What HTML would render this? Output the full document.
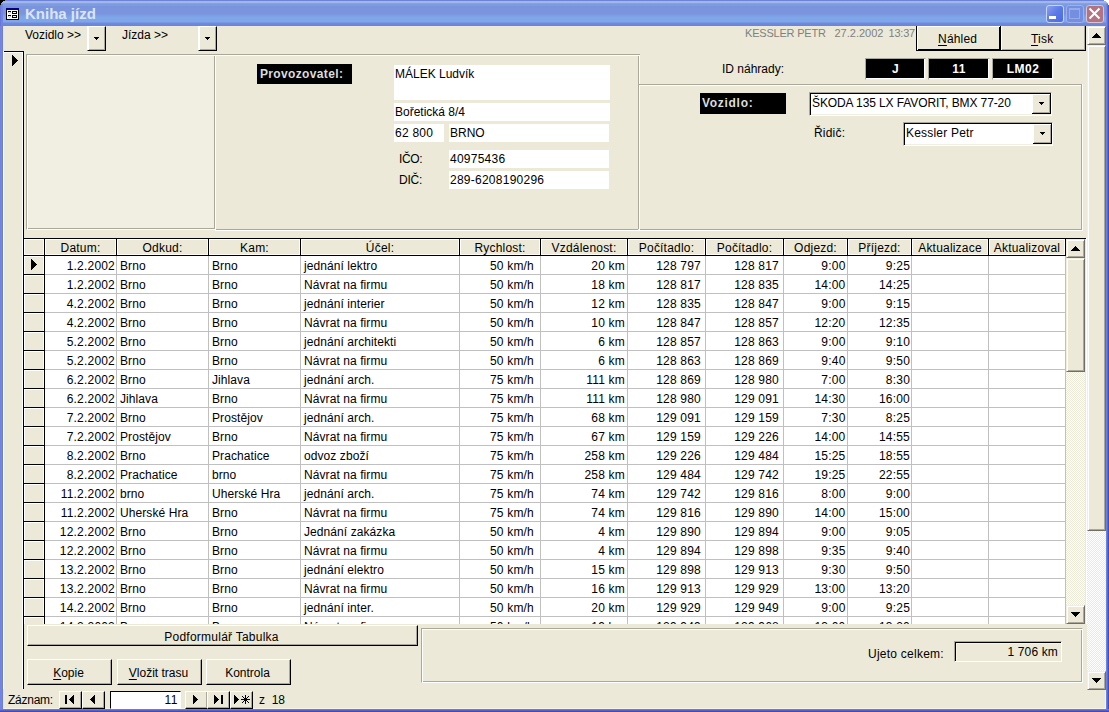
<!DOCTYPE html><html><head><meta charset="utf-8"><style>
*{box-sizing:border-box}
html,body{margin:0;padding:0;width:1109px;height:712px;overflow:hidden;background:#000}
body{font-family:"Liberation Sans",sans-serif;font-size:12px;color:#000;position:relative}
.ab{position:absolute}
.t{position:absolute;white-space:pre;line-height:14px}
#win{position:absolute;left:0;top:0;width:1109px;height:712px;background:#6F80D8}
#title{position:absolute;left:0;top:0;width:1109px;height:26px;
background:linear-gradient(to bottom,#6D82D9 0px,#6D82D9 1px,#A3B6E9 1px,#A3B6E9 3px,#8EA8E4 3px,#7B9CDF 4px,#7B9CDF 6px,#7A93DD 6px,#7A95DE 14px,#7C9BE3 15px,#7EA6E8 17px,#7EA6E8 22px,#6F8ADD 23px,#6A84DC 26px)}
#client{position:absolute;left:3px;top:26px;width:1103px;height:683px;background:#ECE9D8;overflow:hidden}
.bg{background:#ECE9D8}
.btn{position:absolute;background:#ECE9D8;border-style:solid;border-width:1px 1px 1px 1px;border-color:#fff #000 #000 #fff;box-shadow:inset -1px -1px 0 #ACA899}
.etch{position:absolute;border:1px solid;border-color:#ACA899 #fff #fff #ACA899;box-shadow:inset 1px 1px 0 #fff, inset -1px -1px 0 #ACA899}
.wb{position:absolute;background:#fff}
.lbl{position:absolute;background:#000;color:#DCDCDC;font-weight:bold;white-space:pre}
u{text-decoration:underline;text-underline-offset:2px;text-decoration-thickness:1px}
.sb{position:absolute;background:#ECE9D8;border-style:solid;border-width:1px;border-color:#F1EFE2 #716F64 #716F64 #F1EFE2;box-shadow:inset 1px 1px 0 #fff, inset -1px -1px 0 #ACA899}
.dith{background:conic-gradient(#fff 25%,#ECE9D8 0 50%,#fff 0 75%,#ECE9D8 0) 0 0/2px 2px}
</style></head><body>
<div id="win"></div>
<div id="title"></div>

<svg class="ab" style="left:6px;top:8px" width="13" height="12" shape-rendering="crispEdges"><rect x="0" y="0" width="13" height="12" fill="#000"/><rect x="0" y="0" width="13" height="2" fill="#000080"/><rect x="1" y="2" width="11" height="9" fill="#fff"/><g fill="#C8C8C8"><rect x="2" y="4" width="1" height="1"/><rect x="4" y="4" width="1" height="1"/><rect x="2" y="8" width="1" height="1"/><rect x="4" y="8" width="1" height="1"/><rect x="3" y="5" width="1" height="1"/><rect x="3" y="9" width="1" height="1"/></g><rect x="2" y="3" width="3" height="1" fill="#000"/><rect x="2" y="7" width="3" height="1" fill="#000"/><rect x="6" y="3" width="5" height="3" fill="#000"/><rect x="7" y="4" width="3" height="1" fill="#fff"/><rect x="6" y="7" width="5" height="3" fill="#000"/><rect x="7" y="8" width="3" height="1" fill="#fff"/></svg>
<div class="t" style="left:25px;top:5px;font-size:15px;font-weight:bold;color:#DCE5F7;line-height:18px">Kniha jízd</div>
<div class="ab" style="left:1046px;top:5px;width:18px;height:18px;border:1px solid #C8D4F4;border-radius:3px;background:linear-gradient(135deg,#8AA2EC 0%,#5A7AE6 50%,#4A6BE0 100%)"></div>
<div class="ab" style="left:1049px;top:16px;width:7px;height:3px;background:#fff"></div>
<div class="ab" style="left:1066px;top:5px;width:18px;height:18px;border:1px solid #9DB0EC;border-radius:3px;background:#758FE0"></div>
<div class="ab" style="left:1069px;top:8px;width:11px;height:11px;border:1px solid #97ABEA;border-top:2px solid #97ABEA"></div>
<div class="ab" style="left:1086px;top:5px;width:18px;height:18px;border:1px solid #D6C4D4;border-radius:3px;background:#B27482"></div>
<svg class="ab" style="left:1086px;top:5px" width="18" height="18"><path d="M3.5 3.5L13.5 13.5M13.5 3.5L3.5 13.5" stroke="#fff" stroke-width="2"/></svg>
<div class="ab" style="left:1106px;top:4px;width:3px;height:22px;background:linear-gradient(to right,#7388E0 33%,#6470D0 33%,#6470D0 66%,#5054BC 66%)"></div>
<div class="ab" style="left:0;top:4px;width:3px;height:22px;background:linear-gradient(to right,#6676D6 33%,#7484DE 33%)"></div>
<div class="ab" style="left:1104px;top:0;width:5px;height:1px;background:#fff"></div>
<div class="ab" style="left:1106px;top:1px;width:3px;height:1px;background:#fff"></div>
<div class="ab" style="left:1107px;top:2px;width:2px;height:1px;background:#fff"></div>
<div class="ab" style="left:1108px;top:3px;width:1px;height:2px;background:#fff"></div>
<div class="ab" style="left:0;top:0;width:5px;height:1px;background:#000"></div>
<div class="ab" style="left:0;top:1px;width:3px;height:1px;background:#000"></div>
<div class="ab" style="left:0;top:2px;width:2px;height:1px;background:#000"></div>
<div class="ab" style="left:0;top:3px;width:1px;height:2px;background:#000"></div>

<div class="ab" style="left:0;top:26px;width:3px;height:686px;background:linear-gradient(to right,#7383DD,#7585E0 66%,#6C7EDD 66%)"></div>
<div class="ab" style="left:1106px;top:26px;width:3px;height:686px;background:linear-gradient(to right,#6C82E0 33%,#5E6AC8 33%,#5E6AC8 66%,#4A4CB4 66%)"></div>
<div class="ab" style="left:0;top:709px;width:1109px;height:3px;background:linear-gradient(to bottom,#6A7CD8 33%,#5A60C8 33%,#5A60C8 66%,#4848B0 66%)"></div>
<div id="client"></div>
<div class="ab" style="left:3px;top:708px;width:1103px;height:1px;background:#F8F4E2"></div>
<div class="ab" style="left:1105px;top:690px;width:1px;height:19px;background:#F8F4E2"></div>
<div class="ab" style="left:3px;top:26px;width:1103px;height:683px;overflow:hidden">
<div class="ab" style="left:-3px;top:-26px;width:1109px;height:712px">
<div class="t" style="left:25px;top:28px">Vozidlo &gt;&gt;</div>
<div class="btn" style="left:87px;top:26px;width:19px;height:25px;box-shadow:inset 1px 0 0 #fff, inset -1px -1px 0 #ACA899"></div>
<div class="ab" style="left:94px;top:37px;width:5px;height:1px;background:#000"></div>
<div class="ab" style="left:95px;top:38px;width:3px;height:1px;background:#000"></div>
<div class="ab" style="left:96px;top:39px;width:1px;height:1px;background:#000"></div>
<div class="t" style="left:122px;top:28px">Jízda &gt;&gt;</div>
<div class="btn" style="left:198px;top:26px;width:19px;height:25px;box-shadow:inset 1px 0 0 #fff, inset -1px -1px 0 #ACA899"></div>
<div class="ab" style="left:205px;top:37px;width:5px;height:1px;background:#000"></div>
<div class="ab" style="left:206px;top:38px;width:3px;height:1px;background:#000"></div>
<div class="ab" style="left:207px;top:39px;width:1px;height:1px;background:#000"></div>
<div class="t" style="left:745px;top:26px;color:#808080;font-size:11px;letter-spacing:-0.2px">KESSLER PETR</div>
<div class="t" style="left:834.5px;top:26px;color:#808080;font-size:11px">27.2.2002</div>
<div class="t" style="left:888.5px;top:26px;color:#808080;font-size:11px;letter-spacing:-0.2px">13:37</div>
<div class="ab" style="left:916px;top:25px;width:85px;height:26px;background:#ECE9D8;border:1px solid #000;box-shadow:inset 1px 1px 0 #fff, inset -1px -1px 0 #000"></div>
<div class="ab" style="left:1001px;top:25px;width:85px;height:26px;background:#ECE9D8;border-right:1px solid #000;border-bottom:1px solid #000;box-shadow:inset 1px 1px 0 #fff, inset -1px -1px 0 #ACA899"></div>
<div class="t" style="left:938px;top:32px;letter-spacing:0.2px"><u>N</u>áhled</div>
<div class="t" style="left:1031px;top:32px;letter-spacing:0.2px"><u>T</u>isk</div>
<div class="ab" style="left:3px;top:51px;width:21px;height:638px;border-top:1px solid #000;border-right:1px solid #000;box-shadow:inset 0 1px 0 #fff, inset -1px 0 0 #fff"></div>
<div class="ab" style="left:3px;top:51px;width:1px;height:638px;background:#fff"></div>
<div class="ab" style="left:12px;top:55px;width:1px;height:11px;background:#000"></div>
<div class="ab" style="left:13px;top:56px;width:1px;height:9px;background:#000"></div>
<div class="ab" style="left:14px;top:57px;width:1px;height:7px;background:#000"></div>
<div class="ab" style="left:15px;top:58px;width:1px;height:5px;background:#000"></div>
<div class="ab" style="left:16px;top:59px;width:1px;height:3px;background:#000"></div>
<div class="ab" style="left:17px;top:60px;width:1px;height:1px;background:#000"></div>
<div class="ab" style="left:26px;top:54px;width:190px;height:176px;background:#F1EFE2;border:1px solid;border-color:#ACA899 #fff #fff #ACA899;box-shadow:inset 1px 1px 0 #fff, inset -1px -1px 0 #ACA899"></div>
<div class="ab" style="left:215px;top:54px;width:425px;height:1px;background:#ACA899"></div>
<div class="ab" style="left:216px;top:55px;width:423px;height:1px;background:#fff"></div>
<div class="ab" style="left:638px;top:56px;width:1px;height:173px;background:#ACA899"></div>
<div class="ab" style="left:639px;top:55px;width:1px;height:176px;background:#fff"></div>
<div class="ab" style="left:216px;top:229px;width:422px;height:1px;background:#ACA899"></div>
<div class="ab" style="left:215px;top:230px;width:425px;height:1px;background:#fff"></div>
<div class="ab" style="left:639px;top:84px;width:444px;height:1px;background:#ACA899"></div>
<div class="ab" style="left:640px;top:85px;width:442px;height:1px;background:#fff"></div>
<div class="ab" style="left:1081px;top:85px;width:1px;height:145px;background:#ACA899"></div>
<div class="ab" style="left:1082px;top:84px;width:1px;height:147px;background:#fff"></div>
<div class="ab" style="left:640px;top:229px;width:442px;height:1px;background:#ACA899"></div>
<div class="ab" style="left:640px;top:230px;width:443px;height:1px;background:#fff"></div>
<div class="lbl" style="left:257px;top:64px;width:95px;height:20px;padding:3px 0 0 3px;line-height:14px;letter-spacing:0.35px">Provozovatel:</div>
<div class="wb" style="left:394px;top:65px;width:216px;height:35px"></div>
<div class="t" style="left:395px;top:67px">MÁLEK Ludvík</div>
<div class="wb" style="left:394px;top:103px;width:216px;height:18px"></div>
<div class="t" style="left:395px;top:105px">Bořetická 8/4</div>
<div class="wb" style="left:394px;top:124px;width:50px;height:18px"></div>
<div class="t" style="left:395px;top:126px;letter-spacing:0.25px">62 800</div>
<div class="wb" style="left:449px;top:124px;width:160px;height:18px"></div>
<div class="t" style="left:450px;top:126px">BRNO</div>
<div class="t" style="left:399px;top:152px;letter-spacing:-0.4px">IČO:</div>
<div class="wb" style="left:449px;top:150px;width:160px;height:18px"></div>
<div class="t" style="left:450px;top:152px;letter-spacing:0.25px">40975436</div>
<div class="t" style="left:399px;top:173px;letter-spacing:-0.25px">DIČ:</div>
<div class="wb" style="left:449px;top:171px;width:160px;height:18px"></div>
<div class="t" style="left:450px;top:173px;letter-spacing:0.25px">289-6208190296</div>
<div class="t" style="left:722px;top:62px">ID náhrady:</div>
<div class="ab" style="left:865px;top:58px;width:61px;height:22px;background:#000;border:1px solid;border-color:#ACA899 #F1EFE2 #F1EFE2 #ACA899;box-shadow:inset -1px -1px 0 #fff;color:#fff;font-weight:bold;text-align:center;line-height:20px;letter-spacing:0.5px">J</div>
<div class="ab" style="left:928px;top:58px;width:62px;height:22px;background:#000;border:1px solid;border-color:#ACA899 #F1EFE2 #F1EFE2 #ACA899;box-shadow:inset -1px -1px 0 #fff;color:#fff;font-weight:bold;text-align:center;line-height:20px;letter-spacing:0.5px">11</div>
<div class="ab" style="left:992px;top:58px;width:62px;height:22px;background:#000;border:1px solid;border-color:#ACA899 #F1EFE2 #F1EFE2 #ACA899;box-shadow:inset -1px -1px 0 #fff;color:#fff;font-weight:bold;text-align:center;line-height:20px;letter-spacing:0.5px">LM02</div>
<div class="lbl" style="left:700px;top:93px;width:86px;height:21px;padding:3px 0 0 2px;line-height:14px;letter-spacing:0.7px">Vozidlo:</div>
<div class="ab" style="left:809px;top:92px;width:243px;height:24px;background:#fff;border:1px solid;border-color:#ACA899 #fff #fff #ACA899;box-shadow:inset 1px 1px 0 #000, inset -1px -1px 0 #F1EFE2"></div>
<div class="t" style="left:812px;top:96px;letter-spacing:-0.1px">ŠKODA 135 LX FAVORIT, BMX 77-20</div>
<div class="ab" style="left:1032px;top:94px;width:19px;height:20px;background:#ECE9D8;border-right:1px solid #000;border-bottom:1px solid #000;box-shadow:inset 1px 1px 0 #fff, inset -1px -1px 0 #ACA899"></div>
<div class="ab" style="left:1039px;top:102px;width:5px;height:1px;background:#000"></div>
<div class="ab" style="left:1040px;top:103px;width:3px;height:1px;background:#000"></div>
<div class="ab" style="left:1041px;top:104px;width:1px;height:1px;background:#000"></div>
<div class="t" style="left:814px;top:126px;letter-spacing:0.2px">Řidič:</div>
<div class="ab" style="left:903px;top:122px;width:150px;height:24px;background:#fff;border:1px solid;border-color:#ACA899 #fff #fff #ACA899;box-shadow:inset 1px 1px 0 #000, inset -1px -1px 0 #F1EFE2"></div>
<div class="t" style="left:906px;top:126px;letter-spacing:0.2px">Kessler Petr</div>
<div class="ab" style="left:1033px;top:124px;width:19px;height:20px;background:#ECE9D8;border-right:1px solid #000;border-bottom:1px solid #000;box-shadow:inset 1px 1px 0 #fff, inset -1px -1px 0 #ACA899"></div>
<div class="ab" style="left:1040px;top:132px;width:5px;height:1px;background:#000"></div>
<div class="ab" style="left:1041px;top:133px;width:3px;height:1px;background:#000"></div>
<div class="ab" style="left:1042px;top:134px;width:1px;height:1px;background:#000"></div>
<div class="ab" style="left:23px;top:51px;width:1px;height:638px;background:#000"></div>
<div class="ab" style="left:24px;top:238px;width:1042px;height:386px;overflow:hidden;background:#fff">
<div class="ab" style="left:0;top:0;width:1042px;height:18px;background:#ECE9D8;border-top:1px solid #000;border-bottom:1px solid #000"></div>
<div class="ab" style="left:0;top:18px;width:20px;height:368px;background:#ECE9D8"></div>
<div class="ab" style="left:0;top:1px;width:20px;height:1px;background:#fff"></div>
<div class="ab" style="left:0;top:1px;width:1px;height:16px;background:#fff"></div>
<div class="ab" style="left:19px;top:1px;width:1px;height:16px;background:#FFFBF0"></div>
<div class="ab" style="left:0;top:16px;width:20px;height:1px;background:#FFFBF0"></div>
<div class="ab" style="left:0;top:18px;width:1px;height:368px;background:#fff"></div>
<div class="ab" style="left:19px;top:18px;width:1px;height:368px;background:#FFFBF0"></div>
<div class="ab" style="left:0;top:18px;width:20px;height:1px;background:#fff"></div>
<div class="ab" style="left:0;top:36px;width:20px;height:1px;background:#000"></div>
<div class="ab" style="left:21px;top:36px;width:1020px;height:1px;background:#C0C0C0"></div>
<div class="ab" style="left:0;top:37px;width:20px;height:1px;background:#fff"></div>
<div class="ab" style="left:0;top:55px;width:20px;height:1px;background:#000"></div>
<div class="ab" style="left:21px;top:55px;width:1020px;height:1px;background:#C0C0C0"></div>
<div class="ab" style="left:0;top:56px;width:20px;height:1px;background:#fff"></div>
<div class="ab" style="left:0;top:74px;width:20px;height:1px;background:#000"></div>
<div class="ab" style="left:21px;top:74px;width:1020px;height:1px;background:#C0C0C0"></div>
<div class="ab" style="left:0;top:75px;width:20px;height:1px;background:#fff"></div>
<div class="ab" style="left:0;top:93px;width:20px;height:1px;background:#000"></div>
<div class="ab" style="left:21px;top:93px;width:1020px;height:1px;background:#C0C0C0"></div>
<div class="ab" style="left:0;top:94px;width:20px;height:1px;background:#fff"></div>
<div class="ab" style="left:0;top:112px;width:20px;height:1px;background:#000"></div>
<div class="ab" style="left:21px;top:112px;width:1020px;height:1px;background:#C0C0C0"></div>
<div class="ab" style="left:0;top:113px;width:20px;height:1px;background:#fff"></div>
<div class="ab" style="left:0;top:131px;width:20px;height:1px;background:#000"></div>
<div class="ab" style="left:21px;top:131px;width:1020px;height:1px;background:#C0C0C0"></div>
<div class="ab" style="left:0;top:132px;width:20px;height:1px;background:#fff"></div>
<div class="ab" style="left:0;top:150px;width:20px;height:1px;background:#000"></div>
<div class="ab" style="left:21px;top:150px;width:1020px;height:1px;background:#C0C0C0"></div>
<div class="ab" style="left:0;top:151px;width:20px;height:1px;background:#fff"></div>
<div class="ab" style="left:0;top:169px;width:20px;height:1px;background:#000"></div>
<div class="ab" style="left:21px;top:169px;width:1020px;height:1px;background:#C0C0C0"></div>
<div class="ab" style="left:0;top:170px;width:20px;height:1px;background:#fff"></div>
<div class="ab" style="left:0;top:188px;width:20px;height:1px;background:#000"></div>
<div class="ab" style="left:21px;top:188px;width:1020px;height:1px;background:#C0C0C0"></div>
<div class="ab" style="left:0;top:189px;width:20px;height:1px;background:#fff"></div>
<div class="ab" style="left:0;top:207px;width:20px;height:1px;background:#000"></div>
<div class="ab" style="left:21px;top:207px;width:1020px;height:1px;background:#C0C0C0"></div>
<div class="ab" style="left:0;top:208px;width:20px;height:1px;background:#fff"></div>
<div class="ab" style="left:0;top:226px;width:20px;height:1px;background:#000"></div>
<div class="ab" style="left:21px;top:226px;width:1020px;height:1px;background:#C0C0C0"></div>
<div class="ab" style="left:0;top:227px;width:20px;height:1px;background:#fff"></div>
<div class="ab" style="left:0;top:245px;width:20px;height:1px;background:#000"></div>
<div class="ab" style="left:21px;top:245px;width:1020px;height:1px;background:#C0C0C0"></div>
<div class="ab" style="left:0;top:246px;width:20px;height:1px;background:#fff"></div>
<div class="ab" style="left:0;top:264px;width:20px;height:1px;background:#000"></div>
<div class="ab" style="left:21px;top:264px;width:1020px;height:1px;background:#C0C0C0"></div>
<div class="ab" style="left:0;top:265px;width:20px;height:1px;background:#fff"></div>
<div class="ab" style="left:0;top:283px;width:20px;height:1px;background:#000"></div>
<div class="ab" style="left:21px;top:283px;width:1020px;height:1px;background:#C0C0C0"></div>
<div class="ab" style="left:0;top:284px;width:20px;height:1px;background:#fff"></div>
<div class="ab" style="left:0;top:302px;width:20px;height:1px;background:#000"></div>
<div class="ab" style="left:21px;top:302px;width:1020px;height:1px;background:#C0C0C0"></div>
<div class="ab" style="left:0;top:303px;width:20px;height:1px;background:#fff"></div>
<div class="ab" style="left:0;top:321px;width:20px;height:1px;background:#000"></div>
<div class="ab" style="left:21px;top:321px;width:1020px;height:1px;background:#C0C0C0"></div>
<div class="ab" style="left:0;top:322px;width:20px;height:1px;background:#fff"></div>
<div class="ab" style="left:0;top:340px;width:20px;height:1px;background:#000"></div>
<div class="ab" style="left:21px;top:340px;width:1020px;height:1px;background:#C0C0C0"></div>
<div class="ab" style="left:0;top:341px;width:20px;height:1px;background:#fff"></div>
<div class="ab" style="left:0;top:359px;width:20px;height:1px;background:#000"></div>
<div class="ab" style="left:21px;top:359px;width:1020px;height:1px;background:#C0C0C0"></div>
<div class="ab" style="left:0;top:360px;width:20px;height:1px;background:#fff"></div>
<div class="ab" style="left:0;top:378px;width:20px;height:1px;background:#000"></div>
<div class="ab" style="left:21px;top:378px;width:1020px;height:1px;background:#C0C0C0"></div>
<div class="ab" style="left:0;top:379px;width:20px;height:1px;background:#fff"></div>
<div class="ab" style="left:0;top:397px;width:20px;height:1px;background:#000"></div>
<div class="ab" style="left:21px;top:397px;width:1020px;height:1px;background:#C0C0C0"></div>
<div class="ab" style="left:21px;top:1px;width:1020px;height:1px;background:#fff"></div>
<div class="ab" style="left:21px;top:16px;width:1020px;height:1px;background:#FFFBF0"></div>
<div class="ab" style="left:19px;top:1px;width:1px;height:16px;background:#FFFBF0"></div>
<div class="ab" style="left:20px;top:0;width:1px;height:18px;background:#000"></div>
<div class="ab" style="left:21px;top:1px;width:1px;height:16px;background:#fff"></div>
<div class="ab" style="left:20px;top:18px;width:1px;height:368px;background:#000"></div>
<div class="ab" style="left:91px;top:1px;width:1px;height:16px;background:#FFFBF0"></div>
<div class="ab" style="left:92px;top:0;width:1px;height:18px;background:#000"></div>
<div class="ab" style="left:93px;top:1px;width:1px;height:16px;background:#fff"></div>
<div class="ab" style="left:92px;top:18px;width:1px;height:368px;background:#C0C0C0"></div>
<div class="ab" style="left:183px;top:1px;width:1px;height:16px;background:#FFFBF0"></div>
<div class="ab" style="left:184px;top:0;width:1px;height:18px;background:#000"></div>
<div class="ab" style="left:185px;top:1px;width:1px;height:16px;background:#fff"></div>
<div class="ab" style="left:184px;top:18px;width:1px;height:368px;background:#C0C0C0"></div>
<div class="ab" style="left:275px;top:1px;width:1px;height:16px;background:#FFFBF0"></div>
<div class="ab" style="left:276px;top:0;width:1px;height:18px;background:#000"></div>
<div class="ab" style="left:277px;top:1px;width:1px;height:16px;background:#fff"></div>
<div class="ab" style="left:276px;top:18px;width:1px;height:368px;background:#C0C0C0"></div>
<div class="ab" style="left:434px;top:1px;width:1px;height:16px;background:#FFFBF0"></div>
<div class="ab" style="left:435px;top:0;width:1px;height:18px;background:#000"></div>
<div class="ab" style="left:436px;top:1px;width:1px;height:16px;background:#fff"></div>
<div class="ab" style="left:435px;top:18px;width:1px;height:368px;background:#C0C0C0"></div>
<div class="ab" style="left:515px;top:1px;width:1px;height:16px;background:#FFFBF0"></div>
<div class="ab" style="left:516px;top:0;width:1px;height:18px;background:#000"></div>
<div class="ab" style="left:517px;top:1px;width:1px;height:16px;background:#fff"></div>
<div class="ab" style="left:516px;top:18px;width:1px;height:368px;background:#C0C0C0"></div>
<div class="ab" style="left:602px;top:1px;width:1px;height:16px;background:#FFFBF0"></div>
<div class="ab" style="left:603px;top:0;width:1px;height:18px;background:#000"></div>
<div class="ab" style="left:604px;top:1px;width:1px;height:16px;background:#fff"></div>
<div class="ab" style="left:603px;top:18px;width:1px;height:368px;background:#C0C0C0"></div>
<div class="ab" style="left:680px;top:1px;width:1px;height:16px;background:#FFFBF0"></div>
<div class="ab" style="left:681px;top:0;width:1px;height:18px;background:#000"></div>
<div class="ab" style="left:682px;top:1px;width:1px;height:16px;background:#fff"></div>
<div class="ab" style="left:681px;top:18px;width:1px;height:368px;background:#C0C0C0"></div>
<div class="ab" style="left:758px;top:1px;width:1px;height:16px;background:#FFFBF0"></div>
<div class="ab" style="left:759px;top:0;width:1px;height:18px;background:#000"></div>
<div class="ab" style="left:760px;top:1px;width:1px;height:16px;background:#fff"></div>
<div class="ab" style="left:759px;top:18px;width:1px;height:368px;background:#C0C0C0"></div>
<div class="ab" style="left:822px;top:1px;width:1px;height:16px;background:#FFFBF0"></div>
<div class="ab" style="left:823px;top:0;width:1px;height:18px;background:#000"></div>
<div class="ab" style="left:824px;top:1px;width:1px;height:16px;background:#fff"></div>
<div class="ab" style="left:823px;top:18px;width:1px;height:368px;background:#C0C0C0"></div>
<div class="ab" style="left:886px;top:1px;width:1px;height:16px;background:#FFFBF0"></div>
<div class="ab" style="left:887px;top:0;width:1px;height:18px;background:#000"></div>
<div class="ab" style="left:888px;top:1px;width:1px;height:16px;background:#fff"></div>
<div class="ab" style="left:887px;top:18px;width:1px;height:368px;background:#C0C0C0"></div>
<div class="ab" style="left:963px;top:1px;width:1px;height:16px;background:#FFFBF0"></div>
<div class="ab" style="left:964px;top:0;width:1px;height:18px;background:#000"></div>
<div class="ab" style="left:965px;top:1px;width:1px;height:16px;background:#fff"></div>
<div class="ab" style="left:964px;top:18px;width:1px;height:368px;background:#C0C0C0"></div>
<div class="ab" style="left:1040px;top:1px;width:1px;height:16px;background:#FFFBF0"></div>
<div class="ab" style="left:1041px;top:0;width:1px;height:18px;background:#000"></div>
<div class="ab" style="left:1042px;top:1px;width:1px;height:16px;background:#fff"></div>
<div class="ab" style="left:1041px;top:18px;width:1px;height:368px;background:#C0C0C0"></div>
<div class="t" style="left:21px;top:3px;width:71px;text-align:center;letter-spacing:0.2px">Datum:</div>
<div class="t" style="left:93px;top:3px;width:91px;text-align:center;letter-spacing:0.2px">Odkud:</div>
<div class="t" style="left:185px;top:3px;width:91px;text-align:center;letter-spacing:0.2px">Kam:</div>
<div class="t" style="left:277px;top:3px;width:158px;text-align:center;letter-spacing:0.2px">Účel:</div>
<div class="t" style="left:436px;top:3px;width:80px;text-align:center;letter-spacing:0.2px">Rychlost:</div>
<div class="t" style="left:517px;top:3px;width:86px;text-align:center;letter-spacing:0.2px">Vzdálenost:</div>
<div class="t" style="left:604px;top:3px;width:77px;text-align:center;letter-spacing:0.2px">Počítadlo:</div>
<div class="t" style="left:682px;top:3px;width:77px;text-align:center;letter-spacing:0.2px">Počítadlo:</div>
<div class="t" style="left:760px;top:3px;width:63px;text-align:center;letter-spacing:0.2px">Odjezd:</div>
<div class="t" style="left:824px;top:3px;width:63px;text-align:center;letter-spacing:0.2px">Příjezd:</div>
<div class="t" style="left:888px;top:3px;width:76px;text-align:center;letter-spacing:0.2px">Aktualizace</div>
<div class="t" style="left:965px;top:3px;width:76px;text-align:center;letter-spacing:0.2px">Aktualizoval</div>
<div class="ab" style="left:7px;top:21px;width:1px;height:11px;background:#000"></div>
<div class="ab" style="left:8px;top:22px;width:1px;height:9px;background:#000"></div>
<div class="ab" style="left:9px;top:23px;width:1px;height:7px;background:#000"></div>
<div class="ab" style="left:10px;top:24px;width:1px;height:5px;background:#000"></div>
<div class="ab" style="left:11px;top:25px;width:1px;height:3px;background:#000"></div>
<div class="ab" style="left:12px;top:26px;width:1px;height:1px;background:#000"></div>
<div class="t" style="left:1px;top:21px;width:90px;text-align:right;letter-spacing:0.2px">1.2.2002</div>
<div class="t" style="left:96px;top:21px;letter-spacing:0.08px">Brno</div>
<div class="t" style="left:188px;top:21px;letter-spacing:0.08px">Brno</div>
<div class="t" style="left:280px;top:21px;letter-spacing:0.08px">jednání lektro</div>
<div class="t" style="left:416px;top:21px;width:94px;text-align:right;letter-spacing:0.2px">50 km/h</div>
<div class="t" style="left:497px;top:21px;width:104px;text-align:right;letter-spacing:0.2px">20 km</div>
<div class="t" style="left:584px;top:21px;width:93px;text-align:right;letter-spacing:0.2px">128 797</div>
<div class="t" style="left:662px;top:21px;width:93px;text-align:right;letter-spacing:0.2px">128 817</div>
<div class="t" style="left:740px;top:21px;width:81.5px;text-align:right;letter-spacing:0.2px">9:00</div>
<div class="t" style="left:804px;top:21px;width:82px;text-align:right;letter-spacing:0.2px">9:25</div>
<div class="t" style="left:1px;top:40px;width:90px;text-align:right;letter-spacing:0.2px">1.2.2002</div>
<div class="t" style="left:96px;top:40px;letter-spacing:0.08px">Brno</div>
<div class="t" style="left:188px;top:40px;letter-spacing:0.08px">Brno</div>
<div class="t" style="left:280px;top:40px;letter-spacing:0.08px">Návrat na firmu</div>
<div class="t" style="left:416px;top:40px;width:94px;text-align:right;letter-spacing:0.2px">50 km/h</div>
<div class="t" style="left:497px;top:40px;width:104px;text-align:right;letter-spacing:0.2px">18 km</div>
<div class="t" style="left:584px;top:40px;width:93px;text-align:right;letter-spacing:0.2px">128 817</div>
<div class="t" style="left:662px;top:40px;width:93px;text-align:right;letter-spacing:0.2px">128 835</div>
<div class="t" style="left:740px;top:40px;width:81.5px;text-align:right;letter-spacing:0.2px">14:00</div>
<div class="t" style="left:804px;top:40px;width:82px;text-align:right;letter-spacing:0.2px">14:25</div>
<div class="t" style="left:1px;top:59px;width:90px;text-align:right;letter-spacing:0.2px">4.2.2002</div>
<div class="t" style="left:96px;top:59px;letter-spacing:0.08px">Brno</div>
<div class="t" style="left:188px;top:59px;letter-spacing:0.08px">Brno</div>
<div class="t" style="left:280px;top:59px;letter-spacing:0.08px">jednání interier</div>
<div class="t" style="left:416px;top:59px;width:94px;text-align:right;letter-spacing:0.2px">50 km/h</div>
<div class="t" style="left:497px;top:59px;width:104px;text-align:right;letter-spacing:0.2px">12 km</div>
<div class="t" style="left:584px;top:59px;width:93px;text-align:right;letter-spacing:0.2px">128 835</div>
<div class="t" style="left:662px;top:59px;width:93px;text-align:right;letter-spacing:0.2px">128 847</div>
<div class="t" style="left:740px;top:59px;width:81.5px;text-align:right;letter-spacing:0.2px">9:00</div>
<div class="t" style="left:804px;top:59px;width:82px;text-align:right;letter-spacing:0.2px">9:15</div>
<div class="t" style="left:1px;top:78px;width:90px;text-align:right;letter-spacing:0.2px">4.2.2002</div>
<div class="t" style="left:96px;top:78px;letter-spacing:0.08px">Brno</div>
<div class="t" style="left:188px;top:78px;letter-spacing:0.08px">Brno</div>
<div class="t" style="left:280px;top:78px;letter-spacing:0.08px">Návrat na firmu</div>
<div class="t" style="left:416px;top:78px;width:94px;text-align:right;letter-spacing:0.2px">50 km/h</div>
<div class="t" style="left:497px;top:78px;width:104px;text-align:right;letter-spacing:0.2px">10 km</div>
<div class="t" style="left:584px;top:78px;width:93px;text-align:right;letter-spacing:0.2px">128 847</div>
<div class="t" style="left:662px;top:78px;width:93px;text-align:right;letter-spacing:0.2px">128 857</div>
<div class="t" style="left:740px;top:78px;width:81.5px;text-align:right;letter-spacing:0.2px">12:20</div>
<div class="t" style="left:804px;top:78px;width:82px;text-align:right;letter-spacing:0.2px">12:35</div>
<div class="t" style="left:1px;top:97px;width:90px;text-align:right;letter-spacing:0.2px">5.2.2002</div>
<div class="t" style="left:96px;top:97px;letter-spacing:0.08px">Brno</div>
<div class="t" style="left:188px;top:97px;letter-spacing:0.08px">Brno</div>
<div class="t" style="left:280px;top:97px;letter-spacing:0.08px">jednání architekti</div>
<div class="t" style="left:416px;top:97px;width:94px;text-align:right;letter-spacing:0.2px">50 km/h</div>
<div class="t" style="left:497px;top:97px;width:104px;text-align:right;letter-spacing:0.2px">6 km</div>
<div class="t" style="left:584px;top:97px;width:93px;text-align:right;letter-spacing:0.2px">128 857</div>
<div class="t" style="left:662px;top:97px;width:93px;text-align:right;letter-spacing:0.2px">128 863</div>
<div class="t" style="left:740px;top:97px;width:81.5px;text-align:right;letter-spacing:0.2px">9:00</div>
<div class="t" style="left:804px;top:97px;width:82px;text-align:right;letter-spacing:0.2px">9:10</div>
<div class="t" style="left:1px;top:116px;width:90px;text-align:right;letter-spacing:0.2px">5.2.2002</div>
<div class="t" style="left:96px;top:116px;letter-spacing:0.08px">Brno</div>
<div class="t" style="left:188px;top:116px;letter-spacing:0.08px">Brno</div>
<div class="t" style="left:280px;top:116px;letter-spacing:0.08px">Návrat na firmu</div>
<div class="t" style="left:416px;top:116px;width:94px;text-align:right;letter-spacing:0.2px">50 km/h</div>
<div class="t" style="left:497px;top:116px;width:104px;text-align:right;letter-spacing:0.2px">6 km</div>
<div class="t" style="left:584px;top:116px;width:93px;text-align:right;letter-spacing:0.2px">128 863</div>
<div class="t" style="left:662px;top:116px;width:93px;text-align:right;letter-spacing:0.2px">128 869</div>
<div class="t" style="left:740px;top:116px;width:81.5px;text-align:right;letter-spacing:0.2px">9:40</div>
<div class="t" style="left:804px;top:116px;width:82px;text-align:right;letter-spacing:0.2px">9:50</div>
<div class="t" style="left:1px;top:135px;width:90px;text-align:right;letter-spacing:0.2px">6.2.2002</div>
<div class="t" style="left:96px;top:135px;letter-spacing:0.08px">Brno</div>
<div class="t" style="left:188px;top:135px;letter-spacing:0.08px">Jihlava</div>
<div class="t" style="left:280px;top:135px;letter-spacing:0.08px">jednání arch.</div>
<div class="t" style="left:416px;top:135px;width:94px;text-align:right;letter-spacing:0.2px">75 km/h</div>
<div class="t" style="left:497px;top:135px;width:104px;text-align:right;letter-spacing:0.2px">111 km</div>
<div class="t" style="left:584px;top:135px;width:93px;text-align:right;letter-spacing:0.2px">128 869</div>
<div class="t" style="left:662px;top:135px;width:93px;text-align:right;letter-spacing:0.2px">128 980</div>
<div class="t" style="left:740px;top:135px;width:81.5px;text-align:right;letter-spacing:0.2px">7:00</div>
<div class="t" style="left:804px;top:135px;width:82px;text-align:right;letter-spacing:0.2px">8:30</div>
<div class="t" style="left:1px;top:154px;width:90px;text-align:right;letter-spacing:0.2px">6.2.2002</div>
<div class="t" style="left:96px;top:154px;letter-spacing:0.08px">Jihlava</div>
<div class="t" style="left:188px;top:154px;letter-spacing:0.08px">Brno</div>
<div class="t" style="left:280px;top:154px;letter-spacing:0.08px">Návrat na firmu</div>
<div class="t" style="left:416px;top:154px;width:94px;text-align:right;letter-spacing:0.2px">75 km/h</div>
<div class="t" style="left:497px;top:154px;width:104px;text-align:right;letter-spacing:0.2px">111 km</div>
<div class="t" style="left:584px;top:154px;width:93px;text-align:right;letter-spacing:0.2px">128 980</div>
<div class="t" style="left:662px;top:154px;width:93px;text-align:right;letter-spacing:0.2px">129 091</div>
<div class="t" style="left:740px;top:154px;width:81.5px;text-align:right;letter-spacing:0.2px">14:30</div>
<div class="t" style="left:804px;top:154px;width:82px;text-align:right;letter-spacing:0.2px">16:00</div>
<div class="t" style="left:1px;top:173px;width:90px;text-align:right;letter-spacing:0.2px">7.2.2002</div>
<div class="t" style="left:96px;top:173px;letter-spacing:0.08px">Brno</div>
<div class="t" style="left:188px;top:173px;letter-spacing:0.08px">Prostějov</div>
<div class="t" style="left:280px;top:173px;letter-spacing:0.08px">jednání arch.</div>
<div class="t" style="left:416px;top:173px;width:94px;text-align:right;letter-spacing:0.2px">75 km/h</div>
<div class="t" style="left:497px;top:173px;width:104px;text-align:right;letter-spacing:0.2px">68 km</div>
<div class="t" style="left:584px;top:173px;width:93px;text-align:right;letter-spacing:0.2px">129 091</div>
<div class="t" style="left:662px;top:173px;width:93px;text-align:right;letter-spacing:0.2px">129 159</div>
<div class="t" style="left:740px;top:173px;width:81.5px;text-align:right;letter-spacing:0.2px">7:30</div>
<div class="t" style="left:804px;top:173px;width:82px;text-align:right;letter-spacing:0.2px">8:25</div>
<div class="t" style="left:1px;top:192px;width:90px;text-align:right;letter-spacing:0.2px">7.2.2002</div>
<div class="t" style="left:96px;top:192px;letter-spacing:0.08px">Prostějov</div>
<div class="t" style="left:188px;top:192px;letter-spacing:0.08px">Brno</div>
<div class="t" style="left:280px;top:192px;letter-spacing:0.08px">Návrat na firmu</div>
<div class="t" style="left:416px;top:192px;width:94px;text-align:right;letter-spacing:0.2px">75 km/h</div>
<div class="t" style="left:497px;top:192px;width:104px;text-align:right;letter-spacing:0.2px">67 km</div>
<div class="t" style="left:584px;top:192px;width:93px;text-align:right;letter-spacing:0.2px">129 159</div>
<div class="t" style="left:662px;top:192px;width:93px;text-align:right;letter-spacing:0.2px">129 226</div>
<div class="t" style="left:740px;top:192px;width:81.5px;text-align:right;letter-spacing:0.2px">14:00</div>
<div class="t" style="left:804px;top:192px;width:82px;text-align:right;letter-spacing:0.2px">14:55</div>
<div class="t" style="left:1px;top:211px;width:90px;text-align:right;letter-spacing:0.2px">8.2.2002</div>
<div class="t" style="left:96px;top:211px;letter-spacing:0.08px">Brno</div>
<div class="t" style="left:188px;top:211px;letter-spacing:0.08px">Prachatice</div>
<div class="t" style="left:280px;top:211px;letter-spacing:0.08px">odvoz zboží</div>
<div class="t" style="left:416px;top:211px;width:94px;text-align:right;letter-spacing:0.2px">75 km/h</div>
<div class="t" style="left:497px;top:211px;width:104px;text-align:right;letter-spacing:0.2px">258 km</div>
<div class="t" style="left:584px;top:211px;width:93px;text-align:right;letter-spacing:0.2px">129 226</div>
<div class="t" style="left:662px;top:211px;width:93px;text-align:right;letter-spacing:0.2px">129 484</div>
<div class="t" style="left:740px;top:211px;width:81.5px;text-align:right;letter-spacing:0.2px">15:25</div>
<div class="t" style="left:804px;top:211px;width:82px;text-align:right;letter-spacing:0.2px">18:55</div>
<div class="t" style="left:1px;top:230px;width:90px;text-align:right;letter-spacing:0.2px">8.2.2002</div>
<div class="t" style="left:96px;top:230px;letter-spacing:0.08px">Prachatice</div>
<div class="t" style="left:188px;top:230px;letter-spacing:0.08px">brno</div>
<div class="t" style="left:280px;top:230px;letter-spacing:0.08px">Návrat na firmu</div>
<div class="t" style="left:416px;top:230px;width:94px;text-align:right;letter-spacing:0.2px">75 km/h</div>
<div class="t" style="left:497px;top:230px;width:104px;text-align:right;letter-spacing:0.2px">258 km</div>
<div class="t" style="left:584px;top:230px;width:93px;text-align:right;letter-spacing:0.2px">129 484</div>
<div class="t" style="left:662px;top:230px;width:93px;text-align:right;letter-spacing:0.2px">129 742</div>
<div class="t" style="left:740px;top:230px;width:81.5px;text-align:right;letter-spacing:0.2px">19:25</div>
<div class="t" style="left:804px;top:230px;width:82px;text-align:right;letter-spacing:0.2px">22:55</div>
<div class="t" style="left:1px;top:249px;width:90px;text-align:right;letter-spacing:0.2px">11.2.2002</div>
<div class="t" style="left:96px;top:249px;letter-spacing:0.08px">brno</div>
<div class="t" style="left:188px;top:249px;letter-spacing:0.08px">Uherské Hra</div>
<div class="t" style="left:280px;top:249px;letter-spacing:0.08px">jednání arch.</div>
<div class="t" style="left:416px;top:249px;width:94px;text-align:right;letter-spacing:0.2px">75 km/h</div>
<div class="t" style="left:497px;top:249px;width:104px;text-align:right;letter-spacing:0.2px">74 km</div>
<div class="t" style="left:584px;top:249px;width:93px;text-align:right;letter-spacing:0.2px">129 742</div>
<div class="t" style="left:662px;top:249px;width:93px;text-align:right;letter-spacing:0.2px">129 816</div>
<div class="t" style="left:740px;top:249px;width:81.5px;text-align:right;letter-spacing:0.2px">8:00</div>
<div class="t" style="left:804px;top:249px;width:82px;text-align:right;letter-spacing:0.2px">9:00</div>
<div class="t" style="left:1px;top:268px;width:90px;text-align:right;letter-spacing:0.2px">11.2.2002</div>
<div class="t" style="left:96px;top:268px;letter-spacing:0.08px">Uherské Hra</div>
<div class="t" style="left:188px;top:268px;letter-spacing:0.08px">Brno</div>
<div class="t" style="left:280px;top:268px;letter-spacing:0.08px">Návrat na firmu</div>
<div class="t" style="left:416px;top:268px;width:94px;text-align:right;letter-spacing:0.2px">75 km/h</div>
<div class="t" style="left:497px;top:268px;width:104px;text-align:right;letter-spacing:0.2px">74 km</div>
<div class="t" style="left:584px;top:268px;width:93px;text-align:right;letter-spacing:0.2px">129 816</div>
<div class="t" style="left:662px;top:268px;width:93px;text-align:right;letter-spacing:0.2px">129 890</div>
<div class="t" style="left:740px;top:268px;width:81.5px;text-align:right;letter-spacing:0.2px">14:00</div>
<div class="t" style="left:804px;top:268px;width:82px;text-align:right;letter-spacing:0.2px">15:00</div>
<div class="t" style="left:1px;top:287px;width:90px;text-align:right;letter-spacing:0.2px">12.2.2002</div>
<div class="t" style="left:96px;top:287px;letter-spacing:0.08px">Brno</div>
<div class="t" style="left:188px;top:287px;letter-spacing:0.08px">Brno</div>
<div class="t" style="left:280px;top:287px;letter-spacing:0.08px">Jednání zakázka</div>
<div class="t" style="left:416px;top:287px;width:94px;text-align:right;letter-spacing:0.2px">50 km/h</div>
<div class="t" style="left:497px;top:287px;width:104px;text-align:right;letter-spacing:0.2px">4 km</div>
<div class="t" style="left:584px;top:287px;width:93px;text-align:right;letter-spacing:0.2px">129 890</div>
<div class="t" style="left:662px;top:287px;width:93px;text-align:right;letter-spacing:0.2px">129 894</div>
<div class="t" style="left:740px;top:287px;width:81.5px;text-align:right;letter-spacing:0.2px">9:00</div>
<div class="t" style="left:804px;top:287px;width:82px;text-align:right;letter-spacing:0.2px">9:05</div>
<div class="t" style="left:1px;top:306px;width:90px;text-align:right;letter-spacing:0.2px">12.2.2002</div>
<div class="t" style="left:96px;top:306px;letter-spacing:0.08px">Brno</div>
<div class="t" style="left:188px;top:306px;letter-spacing:0.08px">Brno</div>
<div class="t" style="left:280px;top:306px;letter-spacing:0.08px">Návrat na firmu</div>
<div class="t" style="left:416px;top:306px;width:94px;text-align:right;letter-spacing:0.2px">50 km/h</div>
<div class="t" style="left:497px;top:306px;width:104px;text-align:right;letter-spacing:0.2px">4 km</div>
<div class="t" style="left:584px;top:306px;width:93px;text-align:right;letter-spacing:0.2px">129 894</div>
<div class="t" style="left:662px;top:306px;width:93px;text-align:right;letter-spacing:0.2px">129 898</div>
<div class="t" style="left:740px;top:306px;width:81.5px;text-align:right;letter-spacing:0.2px">9:35</div>
<div class="t" style="left:804px;top:306px;width:82px;text-align:right;letter-spacing:0.2px">9:40</div>
<div class="t" style="left:1px;top:325px;width:90px;text-align:right;letter-spacing:0.2px">13.2.2002</div>
<div class="t" style="left:96px;top:325px;letter-spacing:0.08px">Brno</div>
<div class="t" style="left:188px;top:325px;letter-spacing:0.08px">Brno</div>
<div class="t" style="left:280px;top:325px;letter-spacing:0.08px">jednání elektro</div>
<div class="t" style="left:416px;top:325px;width:94px;text-align:right;letter-spacing:0.2px">50 km/h</div>
<div class="t" style="left:497px;top:325px;width:104px;text-align:right;letter-spacing:0.2px">15 km</div>
<div class="t" style="left:584px;top:325px;width:93px;text-align:right;letter-spacing:0.2px">129 898</div>
<div class="t" style="left:662px;top:325px;width:93px;text-align:right;letter-spacing:0.2px">129 913</div>
<div class="t" style="left:740px;top:325px;width:81.5px;text-align:right;letter-spacing:0.2px">9:30</div>
<div class="t" style="left:804px;top:325px;width:82px;text-align:right;letter-spacing:0.2px">9:50</div>
<div class="t" style="left:1px;top:344px;width:90px;text-align:right;letter-spacing:0.2px">13.2.2002</div>
<div class="t" style="left:96px;top:344px;letter-spacing:0.08px">Brno</div>
<div class="t" style="left:188px;top:344px;letter-spacing:0.08px">Brno</div>
<div class="t" style="left:280px;top:344px;letter-spacing:0.08px">Návrat na firmu</div>
<div class="t" style="left:416px;top:344px;width:94px;text-align:right;letter-spacing:0.2px">50 km/h</div>
<div class="t" style="left:497px;top:344px;width:104px;text-align:right;letter-spacing:0.2px">16 km</div>
<div class="t" style="left:584px;top:344px;width:93px;text-align:right;letter-spacing:0.2px">129 913</div>
<div class="t" style="left:662px;top:344px;width:93px;text-align:right;letter-spacing:0.2px">129 929</div>
<div class="t" style="left:740px;top:344px;width:81.5px;text-align:right;letter-spacing:0.2px">13:00</div>
<div class="t" style="left:804px;top:344px;width:82px;text-align:right;letter-spacing:0.2px">13:20</div>
<div class="t" style="left:1px;top:363px;width:90px;text-align:right;letter-spacing:0.2px">14.2.2002</div>
<div class="t" style="left:96px;top:363px;letter-spacing:0.08px">Brno</div>
<div class="t" style="left:188px;top:363px;letter-spacing:0.08px">Brno</div>
<div class="t" style="left:280px;top:363px;letter-spacing:0.08px">jednání inter.</div>
<div class="t" style="left:416px;top:363px;width:94px;text-align:right;letter-spacing:0.2px">50 km/h</div>
<div class="t" style="left:497px;top:363px;width:104px;text-align:right;letter-spacing:0.2px">20 km</div>
<div class="t" style="left:584px;top:363px;width:93px;text-align:right;letter-spacing:0.2px">129 929</div>
<div class="t" style="left:662px;top:363px;width:93px;text-align:right;letter-spacing:0.2px">129 949</div>
<div class="t" style="left:740px;top:363px;width:81.5px;text-align:right;letter-spacing:0.2px">9:00</div>
<div class="t" style="left:804px;top:363px;width:82px;text-align:right;letter-spacing:0.2px">9:25</div>
<div class="t" style="left:1px;top:382px;width:90px;text-align:right;letter-spacing:0.2px">14.2.2002</div>
<div class="t" style="left:96px;top:382px;letter-spacing:0.08px">Brno</div>
<div class="t" style="left:188px;top:382px;letter-spacing:0.08px">Brno</div>
<div class="t" style="left:280px;top:382px;letter-spacing:0.08px">Návrat na firmu</div>
<div class="t" style="left:416px;top:382px;width:94px;text-align:right;letter-spacing:0.2px">50 km/h</div>
<div class="t" style="left:497px;top:382px;width:104px;text-align:right;letter-spacing:0.2px">19 km</div>
<div class="t" style="left:584px;top:382px;width:93px;text-align:right;letter-spacing:0.2px">129 949</div>
<div class="t" style="left:662px;top:382px;width:93px;text-align:right;letter-spacing:0.2px">129 968</div>
<div class="t" style="left:740px;top:382px;width:81.5px;text-align:right;letter-spacing:0.2px">13:00</div>
<div class="t" style="left:804px;top:382px;width:82px;text-align:right;letter-spacing:0.2px">13:20</div>
</div>
<div class="ab dith" style="left:1066px;top:238px;width:19px;height:386px"></div>
<div class="ab" style="left:1066px;top:238px;width:20px;height:1px;background:#000"></div>
<div class="sb" style="left:1066px;top:239px;width:19px;height:19px"></div>
<div class="ab" style="left:1075px;top:246px;width:1px;height:1px;background:#000"></div>
<div class="ab" style="left:1074px;top:247px;width:3px;height:1px;background:#000"></div>
<div class="ab" style="left:1073px;top:248px;width:5px;height:1px;background:#000"></div>
<div class="ab" style="left:1072px;top:249px;width:7px;height:1px;background:#000"></div>
<div class="ab" style="left:1071px;top:250px;width:9px;height:1px;background:#000"></div>
<div class="sb" style="left:1066px;top:258px;width:19px;height:114px"></div>
<div class="sb" style="left:1066px;top:605px;width:19px;height:19px"></div>
<div class="ab" style="left:1071px;top:612px;width:9px;height:1px;background:#000"></div>
<div class="ab" style="left:1072px;top:613px;width:7px;height:1px;background:#000"></div>
<div class="ab" style="left:1073px;top:614px;width:5px;height:1px;background:#000"></div>
<div class="ab" style="left:1074px;top:615px;width:3px;height:1px;background:#000"></div>
<div class="ab" style="left:1075px;top:616px;width:1px;height:1px;background:#000"></div>
<div class="ab" style="left:1086px;top:238px;width:1px;height:386px;background:#fff"></div>
<div class="btn" style="left:27px;top:625px;width:391px;height:21px"></div>
<div class="t" style="left:26px;top:630px;width:391px;text-align:center;letter-spacing:0.25px">Podformulář Tabulka</div>
<div class="etch" style="left:421px;top:628px;width:662px;height:55px"></div>
<div class="t" style="left:868px;top:647px;letter-spacing:0.25px">Ujeto celkem:</div>
<div class="ab" style="left:954px;top:641px;width:108px;height:21px;border:1px solid;border-color:#ACA899 #fff #fff #ACA899;box-shadow:inset 1px 1px 0 #000, inset 2px 2px 0 #F8F4E4"></div>
<div class="t" style="left:954px;top:645px;width:104px;text-align:right;letter-spacing:0.15px">1 706 km</div>
<div class="btn" style="left:27px;top:659px;width:85px;height:26px"></div>
<div class="t" style="left:26px;top:666px;width:85px;text-align:center"><u>K</u>opie</div>
<div class="btn" style="left:117px;top:659px;width:85px;height:26px"></div>
<div class="t" style="left:116px;top:666px;width:85px;text-align:center"><u>V</u>ložit trasu</div>
<div class="btn" style="left:206px;top:659px;width:85px;height:26px"></div>
<div class="t" style="left:205px;top:666px;width:85px;text-align:center">Kontrola</div>
<div class="ab dith" style="left:1087px;top:26px;width:19px;height:664px"></div>
<div class="sb" style="left:1087px;top:26px;width:19px;height:19px"></div>
<div class="ab" style="left:1096px;top:33px;width:1px;height:1px;background:#000"></div>
<div class="ab" style="left:1095px;top:34px;width:3px;height:1px;background:#000"></div>
<div class="ab" style="left:1094px;top:35px;width:5px;height:1px;background:#000"></div>
<div class="ab" style="left:1093px;top:36px;width:7px;height:1px;background:#000"></div>
<div class="ab" style="left:1092px;top:37px;width:9px;height:1px;background:#000"></div>
<div class="sb" style="left:1087px;top:45px;width:19px;height:486px"></div>
<div class="sb" style="left:1087px;top:671px;width:19px;height:19px"></div>
<div class="ab" style="left:1092px;top:678px;width:9px;height:1px;background:#000"></div>
<div class="ab" style="left:1093px;top:679px;width:7px;height:1px;background:#000"></div>
<div class="ab" style="left:1094px;top:680px;width:5px;height:1px;background:#000"></div>
<div class="ab" style="left:1095px;top:681px;width:3px;height:1px;background:#000"></div>
<div class="ab" style="left:1096px;top:682px;width:1px;height:1px;background:#000"></div>
<div class="t" style="left:8px;top:693px;letter-spacing:-0.25px">Záznam:</div>
<div class="btn" style="left:59px;top:691px;width:23px;height:18px"></div>
<div class="btn" style="left:82px;top:691px;width:23px;height:18px"></div>
<div class="btn" style="left:185px;top:691px;width:23px;height:18px"></div>
<div class="btn" style="left:207px;top:691px;width:23px;height:18px"></div>
<div class="btn" style="left:230px;top:691px;width:23px;height:18px"></div>
<div class="ab" style="left:110px;top:691px;width:71px;height:18px;background:#fff;border:1px solid;border-color:#000 #fff #fff #000"></div>
<div class="t" style="left:110px;top:693px;width:68px;text-align:right;letter-spacing:0.5px">11</div>
<div class="t" style="left:259px;top:693px">z  18</div>
<div class="ab" style="left:65px;top:695px;width:2px;height:9px;background:#000"></div>
<div class="ab" style="left:73px;top:695px;width:1px;height:9px;background:#000"></div>
<div class="ab" style="left:72px;top:696px;width:1px;height:7px;background:#000"></div>
<div class="ab" style="left:71px;top:697px;width:1px;height:5px;background:#000"></div>
<div class="ab" style="left:70px;top:698px;width:1px;height:3px;background:#000"></div>
<div class="ab" style="left:69px;top:699px;width:1px;height:1px;background:#000"></div>
<div class="ab" style="left:94px;top:695px;width:1px;height:9px;background:#000"></div>
<div class="ab" style="left:93px;top:696px;width:1px;height:7px;background:#000"></div>
<div class="ab" style="left:92px;top:697px;width:1px;height:5px;background:#000"></div>
<div class="ab" style="left:91px;top:698px;width:1px;height:3px;background:#000"></div>
<div class="ab" style="left:90px;top:699px;width:1px;height:1px;background:#000"></div>
<div class="ab" style="left:193px;top:695px;width:1px;height:9px;background:#000"></div>
<div class="ab" style="left:194px;top:696px;width:1px;height:7px;background:#000"></div>
<div class="ab" style="left:195px;top:697px;width:1px;height:5px;background:#000"></div>
<div class="ab" style="left:196px;top:698px;width:1px;height:3px;background:#000"></div>
<div class="ab" style="left:197px;top:699px;width:1px;height:1px;background:#000"></div>
<div class="ab" style="left:214px;top:695px;width:1px;height:9px;background:#000"></div>
<div class="ab" style="left:215px;top:696px;width:1px;height:7px;background:#000"></div>
<div class="ab" style="left:216px;top:697px;width:1px;height:5px;background:#000"></div>
<div class="ab" style="left:217px;top:698px;width:1px;height:3px;background:#000"></div>
<div class="ab" style="left:218px;top:699px;width:1px;height:1px;background:#000"></div>
<div class="ab" style="left:221px;top:695px;width:2px;height:9px;background:#000"></div>
<div class="ab" style="left:234px;top:695px;width:1px;height:9px;background:#000"></div>
<div class="ab" style="left:235px;top:696px;width:1px;height:7px;background:#000"></div>
<div class="ab" style="left:236px;top:697px;width:1px;height:5px;background:#000"></div>
<div class="ab" style="left:237px;top:698px;width:1px;height:3px;background:#000"></div>
<div class="ab" style="left:238px;top:699px;width:1px;height:1px;background:#000"></div>
<div class="ab" style="left:241px;top:699px;width:9px;height:1px;background:#000"></div>
<div class="ab" style="left:245px;top:695px;width:1px;height:9px;background:#000"></div>
<div class="ab" style="left:244px;top:698px;width:3px;height:3px;background:#000"></div>
<div class="ab" style="left:242px;top:696px;width:1px;height:1px;background:#000"></div>
<div class="ab" style="left:243px;top:697px;width:1px;height:1px;background:#000"></div>
<div class="ab" style="left:248px;top:696px;width:1px;height:1px;background:#000"></div>
<div class="ab" style="left:247px;top:697px;width:1px;height:1px;background:#000"></div>
<div class="ab" style="left:242px;top:702px;width:1px;height:1px;background:#000"></div>
<div class="ab" style="left:243px;top:701px;width:1px;height:1px;background:#000"></div>
<div class="ab" style="left:248px;top:702px;width:1px;height:1px;background:#000"></div>
<div class="ab" style="left:247px;top:701px;width:1px;height:1px;background:#000"></div>
</div></div>
</body></html>
